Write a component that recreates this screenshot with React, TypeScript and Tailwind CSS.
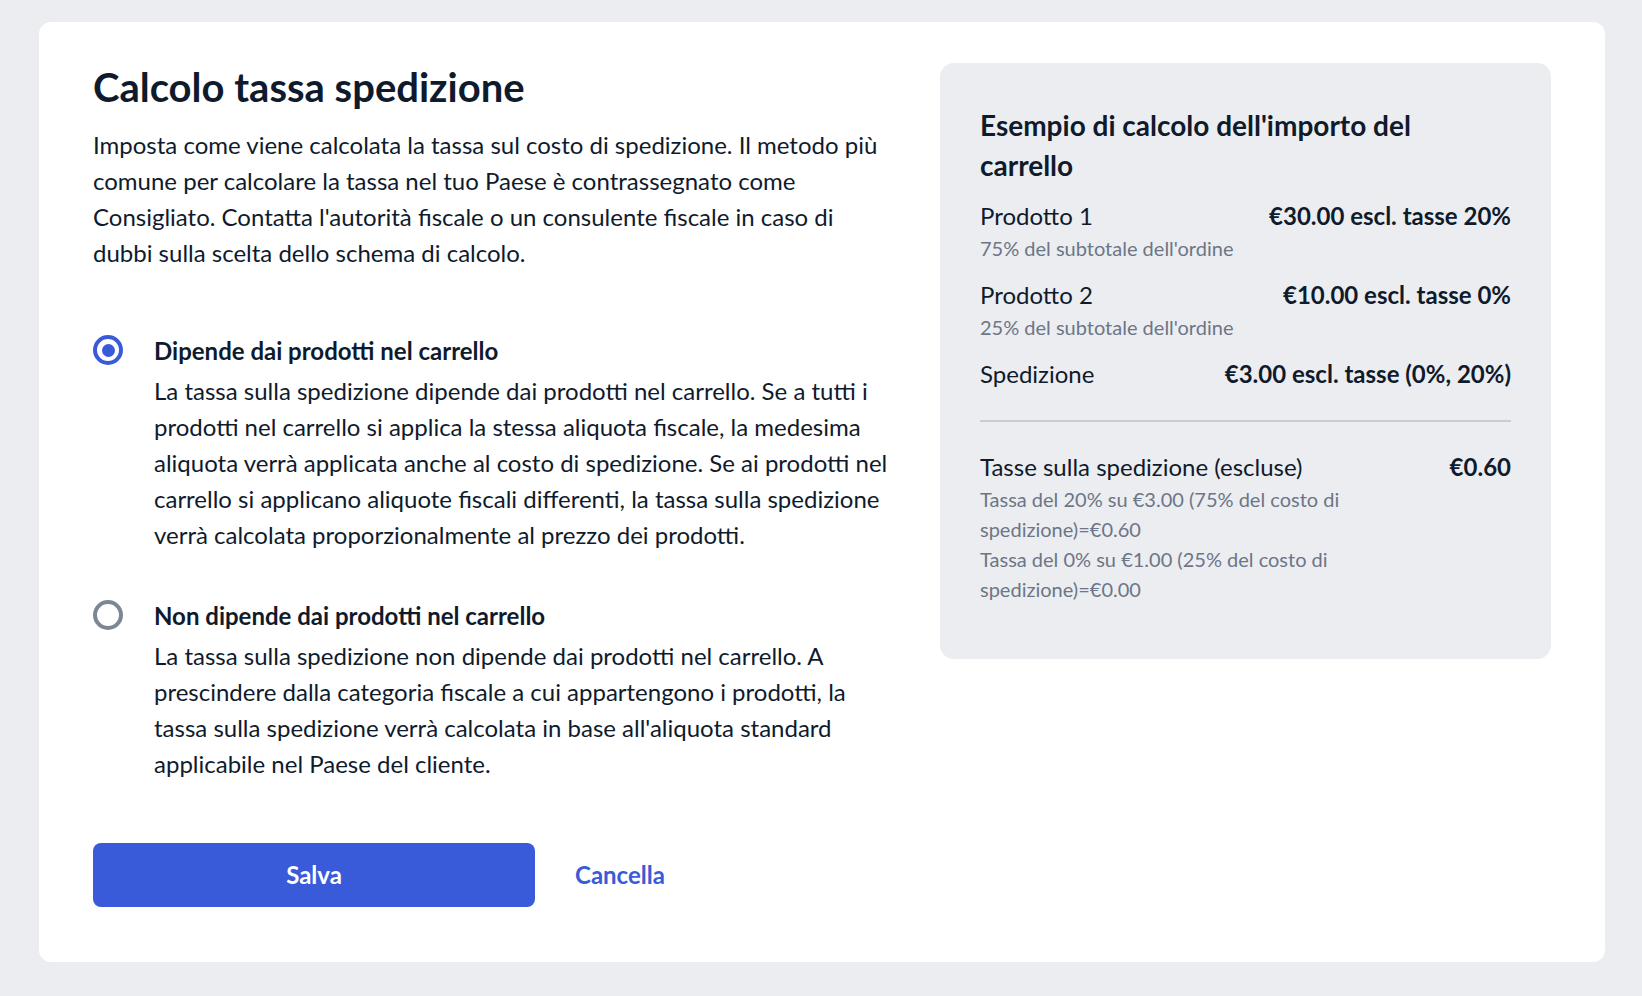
export default function App() {
  return (
    <div className="min-h-screen bg-[#ecedf0] pl-[39px] pr-[37px] pt-[22px] pb-[35px] font-['Lato','Noto_Sans',sans-serif] text-[#0f1b2d]">
      <div className="flex gap-[52px] rounded-[12px] bg-white pl-[54px] pr-[54px] pt-[41px] pb-[55px]">
        <div className="flex-1">
          <h1 className="text-[40px] font-bold leading-[48px]">Calcolo tassa spedizione</h1>
          <p className="mt-[16px] text-[24px] leading-[36px]">
            Imposta come viene calcolata la tassa sul costo di spedizione. Il metodo più comune per calcolare la tassa nel tuo Paese è contrassegnato come Consigliato. Contatta l'autorità fiscale o un consulente fiscale in caso di dubbi sulla scelta dello schema di calcolo.
          </p>

          <div className="mt-[64px] flex items-start gap-[31px]">
            <div className="flex h-[30px] w-[30px] shrink-0 items-center justify-center rounded-full border-[4px] border-[#3a5bd9]">
              <div className="h-[13px] w-[13px] rounded-full bg-[#3a5bd9]" />
            </div>
            <div>
              <div className="text-[24px] font-bold leading-[32px]">Dipende dai prodotti nel carrello</div>
              <p className="mt-[6px] text-[24px] leading-[36px]">
                La tassa sulla spedizione dipende dai prodotti nel carrello. Se a tutti i prodotti nel carrello si applica la stessa aliquota fiscale, la medesima aliquota verrà applicata anche al costo di spedizione. Se ai prodotti nel carrello si applicano aliquote fiscali differenti, la tassa sulla spedizione verrà calcolata proporzionalmente al prezzo dei prodotti.
              </p>
            </div>
          </div>

          <div className="mt-[47px] flex items-start gap-[31px]">
            <div className="h-[30px] w-[30px] shrink-0 rounded-full border-[4px] border-[#7c8796]" />
            <div>
              <div className="text-[24px] font-bold leading-[32px]">Non dipende dai prodotti nel carrello</div>
              <p className="mt-[6px] text-[24px] leading-[36px]">
                La tassa sulla spedizione non dipende dai prodotti nel carrello. A prescindere dalla categoria fiscale a cui appartengono i prodotti, la tassa sulla spedizione verrà calcolata in base all'aliquota standard applicabile nel Paese del cliente.
              </p>
            </div>
          </div>

          <div className="mt-[61px] flex items-center gap-[40px]">
            <button className="h-[64px] w-[442px] rounded-[8px] bg-[#3a5bd9] text-[24px] font-bold text-white">Salva</button>
            <button className="text-[24px] font-bold text-[#3a5bd9]">Cancella</button>
          </div>
        </div>

        <div className="w-[611px] shrink-0 self-start rounded-[14px] bg-[#ecedf0] px-[40px] pt-[42px] pb-[55px]">
          <h2 className="max-w-[460px] text-[28px] font-bold leading-[40px]">Esempio di calcolo dell'importo del carrello</h2>
          <div className="mt-[14px] flex flex-col gap-[15px]">
            <div>
              <div className="flex justify-between text-[24px] leading-[34px]">
                <span>Prodotto 1</span>
                <span className="font-bold">€30.00 escl. tasse 20%</span>
              </div>
              <div className="text-[20px] leading-[30px] text-[#6b7687]">75% del subtotale dell'ordine</div>
            </div>
            <div>
              <div className="flex justify-between text-[24px] leading-[34px]">
                <span>Prodotto 2</span>
                <span className="font-bold">€10.00 escl. tasse 0%</span>
              </div>
              <div className="text-[20px] leading-[30px] text-[#6b7687]">25% del subtotale dell'ordine</div>
            </div>
            <div className="flex justify-between text-[24px] leading-[34px]">
              <span>Spedizione</span>
              <span className="font-bold">€3.00 escl. tasse (0%, 20%)</span>
            </div>
          </div>
          <div className="mt-[29px] mb-[28px] h-[2px] bg-[#c8cdd4]" />
          <div className="flex justify-between">
            <div className="max-w-[420px]">
              <div className="text-[24px] leading-[34px]">Tasse sulla spedizione (escluse)</div>
              <div className="text-[20px] leading-[30px] text-[#6b7687]">
                <div>Tassa del 20% su €3.00 (75% del costo di spedizione)=€0.60</div>
                <div>Tassa del 0% su €1.00 (25% del costo di spedizione)=€0.00</div>
              </div>
            </div>
            <div className="text-[24px] font-bold leading-[34px]">€0.60</div>
          </div>
        </div>
      </div>
    </div>
  );
}
